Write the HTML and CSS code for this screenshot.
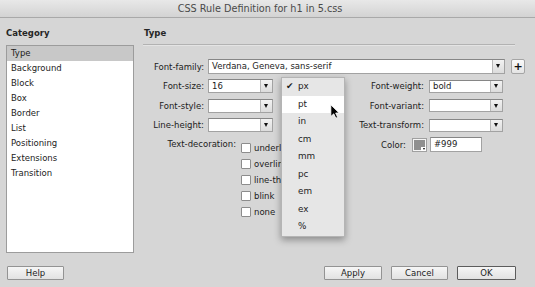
FILE: index.html
```html
<!DOCTYPE html>
<html>
<head>
    <meta charset="utf-8">
    <meta name="viewport" content="width=device-width, initial-scale=1">
    <title>CSS Rule Definition for h1 in 5.css</title>
    <link rel="stylesheet" href="styles.css">
</head>
<body>
    <div class="dialog">
        <div class="titlebar">CSS Rule Definition for h1 in 5.css</div>

        <div class="main">
            <div class="category">
                <div class="heading">Category</div>
                <ul class="category-list">
                    <li class="selected">Type</li>
                    <li>Background</li>
                    <li>Block</li>
                    <li>Box</li>
                    <li>Border</li>
                    <li>List</li>
                    <li>Positioning</li>
                    <li>Extensions</li>
                    <li>Transition</li>
                </ul>
            </div>

            <div class="panel">
                <div class="heading heading-rule">Type</div>
                <div class="form">
                    <div class="row">
                        <label class="label">Font-family:</label>
                        <div class="field field-family"><span class="value">Verdana, Geneva, sans-serif</span><span class="arrow"></span></div>
                        <button class="add">+</button>
                    </div>

                    <div class="columns">
                        <div class="col-left">
                            <div class="row">
                                <label class="label">Font-size:</label>
                                <div class="field field-size"><span class="value">16</span><span class="arrow"></span></div>
                                <div class="unit">
                                    <ul class="menu">
                                        <li class="checked">px</li>
                                        <li class="hover">pt</li>
                                        <li>in</li>
                                        <li>cm</li>
                                        <li>mm</li>
                                        <li>pc</li>
                                        <li>em</li>
                                        <li>ex</li>
                                        <li>%</li>
                                    </ul>
                                    <svg class="cursor" width="10" height="15" viewBox="0 0 12 18">
                                        <path d="M1 1 L1 15 L4.5 11.8 L7 17 L9.2 16 L6.8 10.8 L11 10.8 Z" fill="#000" stroke="#fff" stroke-width="1" stroke-linejoin="round"/>
                                    </svg>
                                </div>
                            </div>
                            <div class="row">
                                <label class="label">Font-style:</label>
                                <div class="field field-size"><span class="value"></span><span class="arrow"></span></div>
                            </div>
                            <div class="row">
                                <label class="label">Line-height:</label>
                                <div class="field field-size"><span class="value"></span><span class="arrow"></span></div>
                            </div>
                            <div class="row-deco">
                                <div class="deco-label">Text-decoration:</div>
                                <ul class="checks">
                                    <li><span class="box"></span>underline</li>
                                    <li><span class="box"></span>overline</li>
                                    <li><span class="box"></span>line-through</li>
                                    <li><span class="box"></span>blink</li>
                                    <li><span class="box"></span>none</li>
                                </ul>
                            </div>
                        </div>

                        <div class="col-right">
                            <div class="row">
                                <label class="label label-wide">Font-weight:</label>
                                <div class="field field-right"><span class="value">bold</span><span class="arrow"></span></div>
                            </div>
                            <div class="row">
                                <label class="label label-wide">Font-variant:</label>
                                <div class="field field-right"><span class="value"></span><span class="arrow"></span></div>
                            </div>
                            <div class="row">
                                <label class="label label-wide">Text-transform:</label>
                                <div class="field field-right"><span class="value"></span><span class="arrow"></span></div>
                            </div>
                            <div class="row">
                                <label class="label label-color">Color:</label>
                                <div class="swatch"><span class="swatch-fill"></span></div>
                                <div class="field field-color"><span class="value">#999</span></div>
                            </div>
                        </div>
                    </div>
                </div>
            </div>
        </div>

        <div class="footer">
            <button class="btn">Help</button>
            <div class="actions">
                <button class="btn btn-apply">Apply</button>
                <button class="btn">Cancel</button>
                <button class="btn btn-ok">OK</button>
            </div>
        </div>
    </div>
</body>
</html>
```

FILE: styles.css
```css
body {
    margin: 0;
    background: #d6d6d6;
    font-family: "DejaVu Sans", Verdana, sans-serif;
    font-size: 8.5px;
    color: #1c1c1c;
}
.dialog {
    width: 535px;
    height: 287px;
    overflow: hidden;
}
.titlebar {
    height: 17px;
    line-height: 18px;
    padding-right: 15px;
    text-align: center;
    font-size: 9.7px;
    color: #4a4a4a;
    background: linear-gradient(#e8e8e8, #d3d3d3);
    border-bottom: 1px solid #a9a9a9;
}
.main {
    display: grid;
    grid-template-columns: 128px 386px;
    column-gap: 9px;
    padding: 9px 0 0 6px;
}
.heading {
    height: 18px;
    box-sizing: border-box;
    line-height: 12px;
    font-weight: bold;
    color: #262626;
}
.heading-rule {
    margin-right: 14px;
    padding-left: 1px;
    border-bottom: 1px solid #b2b2b2;
    box-shadow: 0 1px 0 #e4e4e4;
}
.category-list {
    list-style: none;
    margin: 0;
    padding: 0;
    height: 208px;
    box-sizing: border-box;
    background: #fff;
    border: 1px solid #9c9c9c;
}
.category-list li {
    height: 15px;
    line-height: 15px;
    padding-left: 4px;
}
.category-list .selected {
    background: #c8c8c8;
}

.form {
    padding-top: 14px;
}
.row {
    display: flex;
    align-items: center;
    height: 15px;
    margin-bottom: 4.5px;
}
.label {
    width: 61px;
    flex-shrink: 0;
    margin-right: 4px;
    text-align: right;
}
.label-wide {
    width: 79px;
    margin-right: 5px;
}
.label-color {
    margin-right: 6px;
}
.field {
    display: flex;
    height: 14px;
    box-sizing: border-box;
    background: #fff;
    border: 1px solid #a2a2a2;
    border-top-color: #868686;
}
.field .value {
    flex: 1;
    padding-left: 3px;
    line-height: 12px;
    white-space: nowrap;
    overflow: hidden;
}
.field .arrow {
    position: relative;
    width: 11px;
    background: linear-gradient(#f2f2f2, #dcdcdc);
    border-left: 1px solid #b8b8b8;
}
.field .arrow::after {
    content: "";
    position: absolute;
    left: 3px;
    top: 4px;
    border-left: 2.5px solid transparent;
    border-right: 2.5px solid transparent;
    border-top: 4px solid #111;
}
.field-family {
    width: 297px;
    height: 15px;
}
.field-family .value {
    line-height: 13px;
}
.field-size {
    width: 65px;
}
.field-right {
    width: 74px;
    height: 13px;
}
.field-right .value {
    line-height: 11px;
}
.field-right .arrow::after {
    top: 3.5px;
}
.field-color {
    width: 52px;
    height: 15px;
    margin-left: 3px;
}
.field-color .value {
    line-height: 13px;
}
.add {
    width: 14px;
    height: 15px;
    margin-left: 6px;
    padding: 0;
    border: 1px solid #a5a5a5;
    border-radius: 2px;
    background: linear-gradient(#fafafa, #e4e4e4);
    font: bold 11px/12px "DejaVu Sans", sans-serif;
    color: #111;
}

.columns {
    display: flex;
}
.col-left {
    width: 202px;
}
.col-right {
    width: 158px;
}
.unit {
    position: relative;
    width: 64px;
    height: 14px;
    margin-left: 8px;
}
.menu {
    position: absolute;
    top: -2px;
    left: 0;
    z-index: 2;
    width: 64px;
    box-sizing: border-box;
    margin: 0;
    padding: 0;
    list-style: none;
    background: #e6e6e6;
    border: 1px solid #b4b4b4;
    box-shadow: 0 3px 7px rgba(0, 0, 0, 0.35);
}
.menu li {
    position: relative;
    height: 17.5px;
    line-height: 17.5px;
    padding-left: 16px;
    font-size: 8.8px;
}
.menu .hover {
    background: #fff;
}
.menu .checked::before {
    content: "\2714";
    position: absolute;
    left: 4px;
    font-size: 9px;
}
.cursor {
    position: absolute;
    left: 49px;
    top: 25px;
    z-index: 3;
}

.row-deco {
    display: flex;
    align-items: flex-start;
}
.deco-label {
    width: 93px;
    margin-right: 5px;
    line-height: 15px;
    text-align: right;
}
.checks {
    list-style: none;
    margin: 3px 0 0;
    padding: 0;
    white-space: nowrap;
}
.checks li {
    display: flex;
    align-items: center;
    height: 15.9px;
}
.checks .box {
    width: 10px;
    height: 10px;
    box-sizing: border-box;
    margin-right: 3px;
    background: #fff;
    border: 1px solid #8c8c8c;
    border-radius: 1px;
}

.swatch {
    position: relative;
    width: 15px;
    height: 14px;
    box-sizing: border-box;
    padding: 1px;
    background: #f4f4f4;
    border: 1px solid #a0a0a0;
}
.swatch-fill {
    display: block;
    height: 100%;
    background: #8f8f8f;
}
.swatch::after {
    content: "";
    position: absolute;
    right: 0;
    bottom: 0;
    width: 5px;
    height: 4px;
    background: #fff;
}
.swatch::before {
    content: "";
    position: absolute;
    right: 1px;
    bottom: 1px;
    z-index: 1;
    border-left: 1.5px solid transparent;
    border-right: 1.5px solid transparent;
    border-top: 2px solid #000;
}

.footer {
    display: flex;
    padding: 13px 19px 0 7px;
}
.actions {
    display: flex;
    gap: 9px;
    margin-left: auto;
}
.btn {
    width: 57px;
    height: 14px;
    box-sizing: border-box;
    padding: 0;
    border: 1px solid #939393;
    border-radius: 1px;
    background: linear-gradient(#f6f6f6, #e2e2e2);
    font: inherit;
    line-height: 12px;
    color: #1c1c1c;
}
.btn-apply {
    width: 58px;
}
.btn-ok {
    width: 59px;
    border-color: #5c5c5c;
}
```
